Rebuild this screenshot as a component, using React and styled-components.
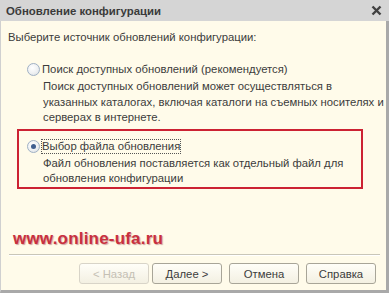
import React from "react";
import styled, { createGlobalStyle } from "styled-components";

const Global = createGlobalStyle`
  html, body { margin: 0; padding: 0; background: #fffbea; }
  body { font-family: "Liberation Sans", Arial, sans-serif; }
`;

const Window = styled.div`
  width: 389px;
  height: 293px;
  display: flex;
  flex-direction: column;
  box-sizing: border-box;
  overflow: hidden;
`;

const TitleBar = styled.div`
  height: 21px;
  flex: 0 0 21px;
  display: flex;
  align-items: center;
  justify-content: space-between;
  padding: 0 7px 0 6px;
  background: #d5d5d5;
  color: #3a3a3a;
  font-weight: bold;
  font-size: 11.4px;
`;

const Close = styled.svg`
  width: 11px;
  height: 11px;
`;

const Body = styled.div`
  flex: 1;
  display: flex;
  flex-direction: column;
  background: #fffbea;
  border-left: 1px solid #d0d0d0;
  border-right: 3px solid #a9a9a9;
  border-bottom: 3px solid #a9a9a9;
  padding: 9px 5px 0 7px;
  font-size: 11.3px;
  color: #3c3c3c;
  white-space: nowrap;
`;

const Prompt = styled.div`
  line-height: 15px;
`;

const Group = styled.div`
  margin-left: ${p => p.$inset}px;
  margin-top: ${p => p.$top}px;
  padding: ${p => (p.$framed ? "8px 0 4px 8px" : "0")};
  width: ${p => (p.$framed ? "346px" : "auto")};
  height: ${p => (p.$framed ? "60px" : "auto")};
  box-sizing: border-box;
  border: ${p => (p.$framed ? "2px solid #cc2233" : "none")};
`;

const RadioRow = styled.label`
  display: flex;
  align-items: center;
  gap: 1px;
  line-height: 15px;
`;

const RadioCircle = styled.span`
  width: 11px;
  height: 11px;
  border-radius: 50%;
  border: 1px solid #9fb0c4;
  background: radial-gradient(circle at 40% 35%, #ffffff 0%, #eef0f2 55%, #d6dbe0 100%);
  display: flex;
  align-items: center;
  justify-content: center;
  flex: 0 0 auto;
  &::after {
    content: "";
    width: 5px;
    height: 5px;
    border-radius: 50%;
    background: ${p => (p.$checked ? "#3f5e8f" : "transparent")};
  }
`;

const RadioText = styled.span`
  padding: 0 1px;
  outline: ${p => (p.$focused ? "1px dotted #555" : "none")};
  outline-offset: -1px;
`;

const Desc = styled.div`
  margin-left: 16px;
  margin-top: 2px;
  line-height: 15.5px;
`;

const Spacer = styled.div`
  flex: 1;
`;

const Watermark = styled.div`
  font-family: "Liberation Sans", Arial, sans-serif;
  font-weight: bold;
  font-size: 17px;
  color: #c8303f;
  text-shadow: 1px 1px 1px rgba(120, 0, 20, 0.35);
  margin-left: 5px;
  letter-spacing: 0.2px;
`;

const Separator = styled.div`
  height: 0;
  border-top: 1px solid #c9c6b8;
  border-bottom: 1px solid #ffffff;
  margin: 5px 1px 0 1px;
`;

const Buttons = styled.div`
  display: flex;
  justify-content: flex-end;
  gap: 5px;
  padding: 7px 5px 6px 0;
`;

const Button = styled.button`
  width: ${p => p.$w}px;
  height: 21px;
  margin-left: ${p => p.$ml || 0}px;
  border: 1px solid ${p => (p.disabled ? "#d8d4c8" : "#a8a598")};
  border-radius: 3px;
  background: linear-gradient(#fffef8, #f3f0e2);
  font-family: "Liberation Sans", Arial, sans-serif;
  font-size: 11.3px;
  color: ${p => (p.disabled ? "#c4c0b4" : "#3c3c3c")};
  padding: 0;
`;

export default function App() {
  return (
    <Window>
      <Global />
      <TitleBar>
        <span>Обновление конфигурации</span>
        <Close viewBox="0 0 11 11">
          <path d="M1.5 1.5 L9.5 9.5 M9.5 1.5 L1.5 9.5" stroke="#404040" strokeWidth="2.4" />
        </Close>
      </TitleBar>
      <Body>
        <Prompt>Выберите источник обновлений конфигурации:</Prompt>
        <Group $inset={19} $top={17}>
          <RadioRow>
            <RadioCircle />
            <RadioText>Поиск доступных обновлений (рекомендуется)</RadioText>
          </RadioRow>
          <Desc>
            Поиск доступных обновлений может осуществляться в
            <br />
            указанных каталогах, включая каталоги на съемных носителях и
            <br />
            серверах в интернете.
          </Desc>
        </Group>
        <Group $inset={9} $top={3} $framed>
          <RadioRow>
            <RadioCircle $checked />
            <RadioText $focused>Выбор файла обновления</RadioText>
          </RadioRow>
          <Desc>
            Файл обновления поставляется как отдельный файл для
            <br />
            обновления конфигурации
          </Desc>
        </Group>
        <Spacer />
        <Watermark>www.online-ufa.ru</Watermark>
        <Separator />
        <Buttons>
          <Button $w={70} disabled>&lt; Назад</Button>
          <Button $w={70} $ml={-2}>Далее &gt;</Button>
          <Button $w={70} $ml={2}>Отмена</Button>
          <Button $w={70} $ml={2}>Справка</Button>
        </Buttons>
      </Body>
    </Window>
  );
}
